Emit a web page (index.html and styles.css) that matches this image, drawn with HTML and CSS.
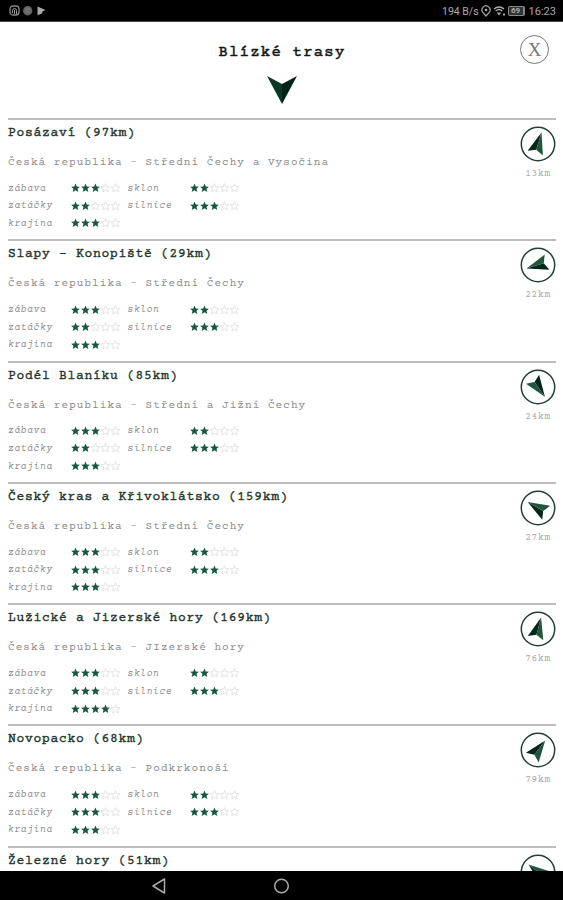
FILE: index.html
```html
<!DOCTYPE html>
<html lang="cs">
<head>
    <meta charset="UTF-8">
    <meta name="viewport" content="width=device-width, initial-scale=1.0">
    <title>Blízké trasy</title>
    <link rel="stylesheet" href="styles.css">
</head>
<body>
    <div class="status-bar">
        <svg class="status-left" width="40" height="12" viewBox="0 0 40 12">
            <rect x="1" y="1" width="9" height="9" rx="3" fill="none" stroke="#888" stroke-width="1.3"/>
            <path d="M3.5 8V5.5a2 2 0 0 1 4 0V9M5.5 5v4" fill="none" stroke="#999"/>
            <circle cx="18.7" cy="5.7" r="4.7" fill="#666"/>
            <path d="M16 4h5M16 7h5" stroke="#888" stroke-width="0.8"/>
            <path d="M28.5 1.5l8 3.5-3 1.5-.5 2-4.5 1.8z" fill="#aaa"/>
        </svg>
        <div class="status-right">
            <span class="speed">194 B/s</span>
            <svg width="10" height="12" viewBox="0 0 10 12">
                <path d="M5 11L2 7.6a4 4 0 1 1 6 0z" fill="none" stroke="#aaa" stroke-width="1.2"/>
                <circle cx="5" cy="5" r="1.3" fill="#aaa"/>
            </svg>
            <svg width="13" height="12" viewBox="0 0 13 12">
                <path d="M1 4a7.500 7.500 0 0 1 10 0M2.700 6a5 5 0 0 1 6.600 0" fill="none" stroke="#aaa" stroke-width="1.5"/>
                <path d="M3.800 7.500h4.400L6 10.500zM10 8.500h2v2h-2z" fill="#aaa"/>
            </svg>
            <span class="battery">69</span>
            <span class="clock">16:23</span>
        </div>
    </div>

    <div class="screen">
        <div class="header">
            <h1>Blízké trasy</h1>
            <svg class="header-arrow" width="30" height="30" viewBox="0 0 30 30">
                <path d="M0 1l15 8v20z" fill="#0b3727"/>
                <path d="M30 1L15 9v20z" fill="#022417"/>
            </svg>
            <button class="close" aria-label="Zavřít">X</button>
        </div>
        <div class="routes" id="routes"></div>
    </div>

    <div class="nav-bar">
        <svg class="nav-back" width="16" height="18" viewBox="0 0 16 18">
            <path d="M13.500 2v14L2 9z" fill="none" stroke="#aaa" stroke-width="1.5" stroke-linejoin="round"/>
        </svg>
        <svg class="nav-home" width="18" height="18" viewBox="0 0 18 18">
            <circle cx="8.500" cy="9" r="6.800" fill="none" stroke="#aaa" stroke-width="1.5"/>
        </svg>
    </div>

    <script src="script.js"></script>
</body>
</html>
```
FILE: styles.css
```css
* {
    box-sizing: border-box;
}

body {
    margin: 0;
    height: 900px;
    display: flex;
    flex-direction: column;
    overflow: hidden;
    background: #fff;
    font-family: "Courier Prime", "Liberation Mono", monospace;
}

.status-bar {
    flex: none;
    height: 22px;
    padding: 1px 7px 0 9px;
    display: flex;
    align-items: center;
    justify-content: space-between;
    background: #000;
    border-bottom: 1px solid #444;
    color: #aaa;
    font-family: Roboto, sans-serif;
    font-size: 11px;
}

.status-right {
    display: flex;
    align-items: center;
    gap: 2px;
}

.speed {
    font-size: 10.5px;
}

.battery {
    width: 17px;
    height: 10px;
    border: 1px solid #888;
    border-right-width: 2px;
    border-radius: 2px;
    background: #333;
    font-size: 8px;
    font-weight: bold;
    line-height: 8px;
    text-align: center;
}

.clock {
    margin-left: 2px;
    font-size: 11px;
}

.screen {
    flex: 1;
    min-height: 0;
    overflow: hidden;
    padding: 0 7px 0 8px;
}

.header {
    position: relative;
    height: 96px;
    display: flex;
    flex-direction: column;
    align-items: center;
}

.header h1 {
    margin: 21px 0 0;
    color: #111815;
    font-size: 15.5px;
    line-height: 20px;
    letter-spacing: 1.3px;
    font-weight: normal;
    -webkit-text-stroke: 0.5px #111815;
}

.header-arrow {
    display: block;
    margin-top: 12px;
}

.close {
    position: absolute;
    top: 13px;
    right: 7px;
    width: 29px;
    height: 29px;
    padding: 0;
    border: 1.5px solid #777;
    border-radius: 50%;
    background: none;
    color: #777;
    font: 19px/26px "Liberation Serif", serif;
}

.route {
    height: 121.3px;
    border-top: 2px solid #bdbdbd;
    display: flex;
    justify-content: space-between;
}

.route h2 {
    margin: 4px 0 0;
    color: #22352c;
    font-size: 13px;
    line-height: 18px;
    letter-spacing: 0.7px;
    font-weight: normal;
    -webkit-text-stroke: 0.35px #22352c;
    white-space: nowrap;
}

.region {
    margin-top: 13px;
    color: #8c8c8c;
    font-size: 11px;
    line-height: 16px;
    letter-spacing: 1.05px;
    white-space: nowrap;
}

.ratings {
    margin-top: 8.5px;
    display: grid;
    grid-template-columns: 62.5px 57px 62.5px 57px;
    grid-auto-rows: 17.6px;
    align-items: center;
}

.label {
    padding-top: 1px;
    color: #8c8c8c;
    font-size: 9.5px;
    font-style: italic;
    letter-spacing: 0.7px;
}

.stars {
    display: flex;
}

.star {
    display: block;
    width: 10px;
    height: 10px;
    fill: none;
    stroke: #dcdcdc;
    stroke-width: 0.8px;
}

.star.on {
    fill: #16573e;
    stroke: none;
}

.direction {
    width: 36px;
    padding-top: 6px;
    display: flex;
    flex-direction: column;
    align-items: center;
}

.compass {
    display: block;
}

.distance {
    margin-top: 5px;
    color: #aaa;
    font-size: 9.5px;
    line-height: 14px;
    letter-spacing: 0.7px;
}

.nav-bar {
    flex: none;
    height: 29px;
    padding-left: 151px;
    display: flex;
    align-items: center;
    gap: 106px;
    background: #000;
}
```
FILE: script.js
```javascript
// ratings order: zábava, sklon, zatáčky, silnice, krajina
const routes = [
    { name: 'Posázaví (97km)', region: 'Střední Čechy a Vysočina', ratings: [3, 2, 2, 3, 3], distance: 13, angle: 17 },
    { name: 'Slapy - Konopiště (29km)', region: 'Střední Čechy', ratings: [3, 2, 2, 3, 3], distance: 22, angle: -107 },
    { name: 'Podél Blaníku (85km)', region: 'Střední a Jižní Čechy', ratings: [3, 2, 2, 3, 3], distance: 24, angle: 145 },
    { name: 'Český kras a Křivoklátsko (159km)', region: 'Střední Čechy', ratings: [3, 2, 3, 3, 3], distance: 27, angle: -60 },
    { name: 'Lužické a Jizerské hory (169km)', region: 'JIzerské hory', ratings: [3, 2, 3, 3, 4], distance: 76, angle: 15 },
    { name: 'Novopacko (68km)', region: 'Podkrkonoší', ratings: [3, 2, 3, 3, 3], distance: 79, angle: 37 },
    { name: 'Železné hory (51km)', angle: -52 }
];

const labels = ['zábava', 'sklon', 'zatáčky', 'silnice', 'krajina'];

function stars(count) {
    let html = '';
    for (let i = 0; i < 5; i++) {
        html += `<svg class="star${i < count ? ' on' : ''}" viewBox="0 0 10 10">
            <path d="M4.500 .6l1.200 2.900 3.200.3-2.400 2 .8 3.100L4.500 7.300 1.700 8.900l.8-3.100-2.400-2 3.200-.3z"/>
        </svg>`;
    }
    return `<div class="stars">${html}</div>`;
}

function compass(angle) {
    return `<svg class="compass" width="36" height="36" viewBox="-18 -18 36 36">
        <circle r="16.7" fill="none" stroke="#263f35" stroke-width="1.5"/>
        <g transform="rotate(${angle})">
            <path d="M0-12L-8 9.500 0 6z" fill="#05261a"/>
            <path d="M0-12L8 9.500 0 6z" fill="#22553f"/>
        </g>
    </svg>`;
}

function details(route) {
    if (!route.region) return '';
    return `<div class="region">Česká republika - ${route.region}</div>
        <div class="ratings">
            ${route.ratings.map((count, i) => `<span class="label">${labels[i]}</span>${stars(count)}`).join('')}
        </div>`;
}

document.getElementById('routes').innerHTML = routes.map(route => `
    <div class="route">
        <div class="info">
            <h2>${route.name}</h2>
            ${details(route)}
        </div>
        <div class="direction">
            ${compass(route.angle)}
            ${route.distance ? `<div class="distance">${route.distance}km</div>` : ''}
        </div>
    </div>`).join('');
```
